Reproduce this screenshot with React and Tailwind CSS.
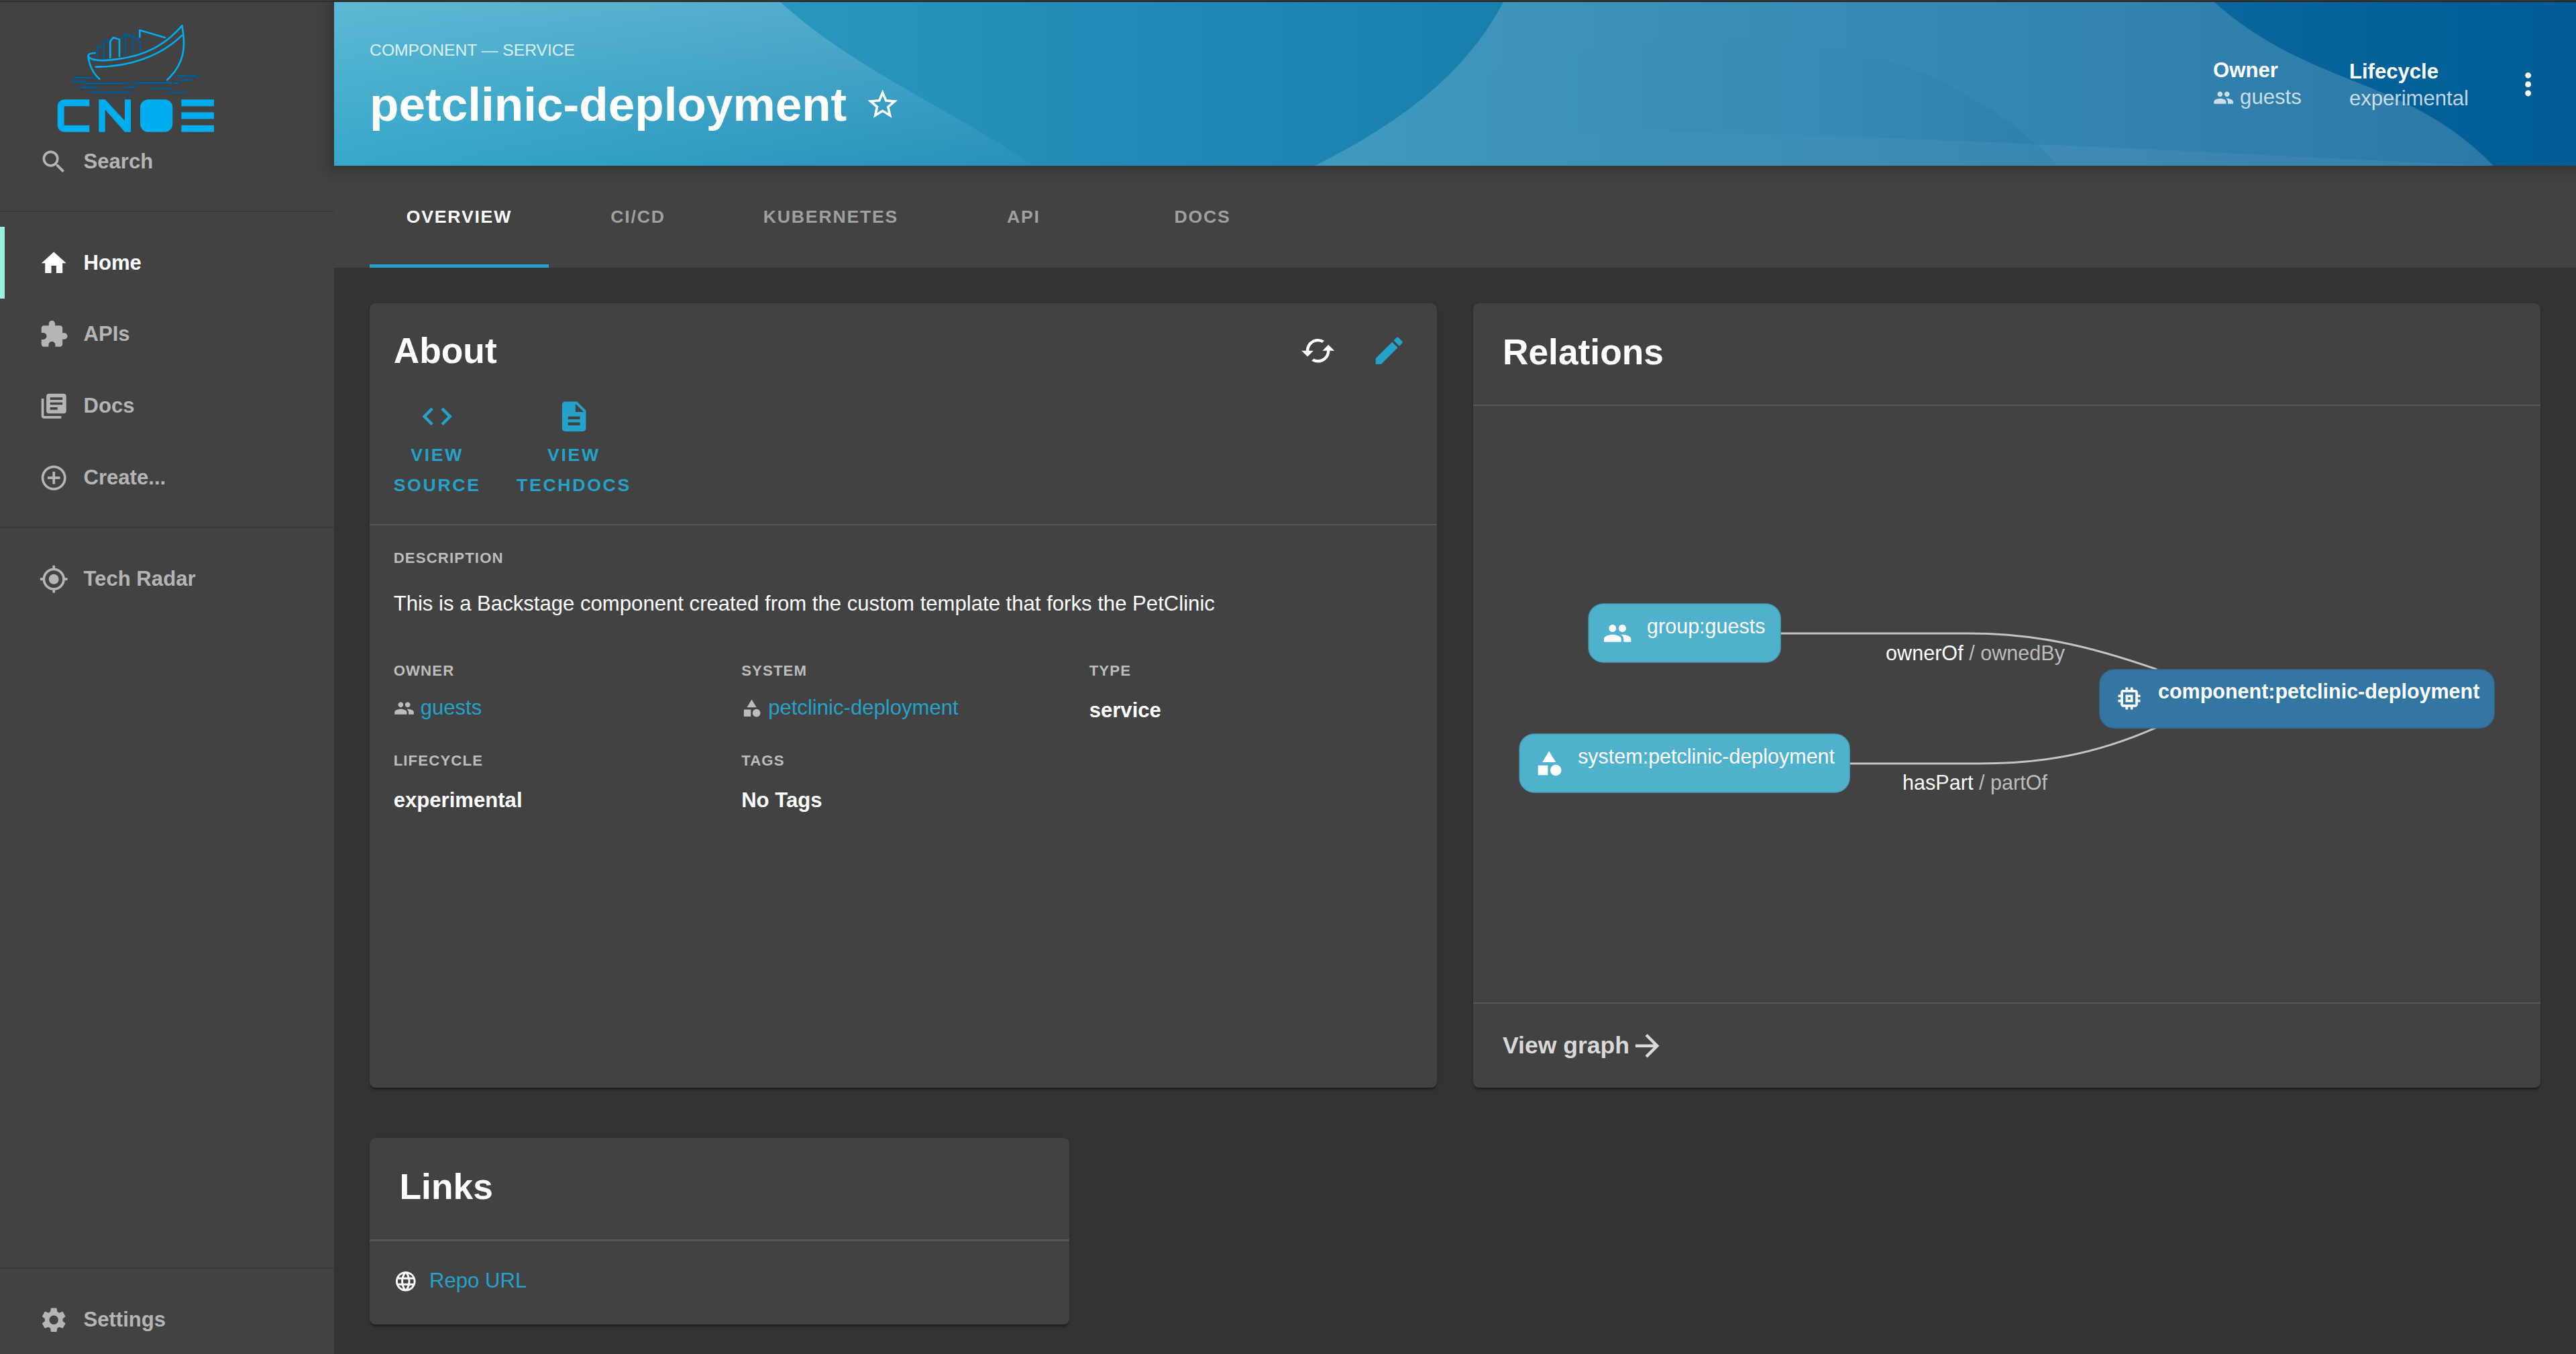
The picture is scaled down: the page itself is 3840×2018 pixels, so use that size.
// App.jsx - catalog entity page, dark theme
import React from 'react';
import {
  MdHome,
  MdExtension,
  MdLibraryBooks,
  MdAddCircleOutline,
  MdGpsFixed,
  MdSettings,
  MdSearch,
  MdStarBorder,
  MdMoreVert,
  MdCached,
  MdEdit,
  MdCode,
  MdDescription,
  MdGroup,
  MdCategory,
  MdLanguage,
  MdMemory,
  MdArrowForward,
} from 'react-icons/md';

const MAIN_NAV = [
  { label: 'Home', icon: MdHome, active: true },
  { label: 'APIs', icon: MdExtension },
  { label: 'Docs', icon: MdLibraryBooks },
  { label: 'Create...', icon: MdAddCircleOutline },
];

const TABS = ['Overview', 'CI/CD', 'Kubernetes', 'API', 'Docs'];

function Logo() {
  // viewBox is 3x screen pixels of the logo block
  return (
    <svg viewBox="0 0 900 540" className="block w-[135px] h-[81px] ml-[27px] mt-[7.6px] overflow-visible" fill="none">
      <g stroke="#00aeef" strokeWidth="8" strokeLinecap="round" strokeLinejoin="round">
        <path d="M245 177 Q215 178 214 190 Q222 255 265 293" />
        <path d="M214 190 C225 215 290 212 340 205 C470 190 560 140 634 55" />
        <path d="M248 239 C400 240 540 190 634 98" />
        <path d="M634 55 C650 140 650 220 568 297" />
        <path d="M445 106 L445 75 L558 108" />
        <path d="M313 198 V125 L326 108 L354 116 V192" />
      </g>
      <g stroke="#005b94" strokeWidth="8" strokeLinecap="round" strokeLinejoin="round">
        <path d="M255 198 V147 H273" />
        <path d="M284 200 V122 H306" />
        <path d="M362 110 L380 95 L418 100 L447 127 V172" />
        <path d="M381 185 V97 M413 175 V105" />
        <path d="M150 287 H243 M145 305 H195 L198 313 H390 M412 311 H625 M612 280 H708 M632 298 H673" />
        <path d="M174 332 H255 M378 331 H427 M500 336 H582 M230 352 H405 M575 354 H650" />
      </g>
      <g fill="#00aeef">
        <path d="M220 400 H110 Q92 400 92 418 V497 Q92 515 110 515 H220" fill="none" stroke="#00aeef" strokeWidth="30" />
        <polygon points="262,530 262,385 290,385 378,480 378,385 405,385 405,530 378,530 290,430 290,530" />
        <rect x="447" y="385" width="145" height="145" rx="36" />
        <rect x="631" y="385" width="146" height="30" />
        <rect x="631" y="442" width="146" height="30" />
        <rect x="631" y="500" width="146" height="30" />
      </g>
    </svg>
  );
}

function NavItem({ item }) {
  const Icon = item.icon;
  return (
    <div className={`relative flex items-center h-12 pl-[26px] gap-2.5 text-sm font-bold ${item.active ? 'text-white' : 'text-[#b5b5b5]'}`}>
      {item.active && <span className="absolute left-0 inset-y-0 w-[3px] bg-[#9bf0e1]" />}
      <Icon size={20} />
      <span>{item.label}</span>
    </div>
  );
}

function Sidebar() {
  return (
    <aside className="w-56 shrink-0 flex flex-col bg-[#424242] overflow-hidden">
      <div className="h-[83px]">
        <Logo />
      </div>
      <NavItem item={{ label: 'Search', icon: MdSearch }} />
      <div className="h-px bg-[#383838] mt-[9px] mb-2.5" />
      {MAIN_NAV.map((item) => (
        <NavItem key={item.label} item={item} />
      ))}
      <div className="h-px bg-[#383838] mt-[9px] mb-2.5" />
      <NavItem item={{ label: 'Tech Radar', icon: MdGpsFixed }} />
      <div className="mt-auto -mb-px">
        <div className="h-px bg-[#383838] mb-2.5" />
        <NavItem item={{ label: 'Settings', icon: MdSettings }} />
      </div>
    </aside>
  );
}

function HeaderWaves() {
  // Coordinates are screen pixels, measured from the header's top left corner
  return (
    <svg viewBox="0 0 3342 244" preserveAspectRatio="none" className="absolute inset-0 w-full h-full">
      <defs>
        <linearGradient id="fade" x1="0" y1="0" x2="0" y2="1">
          <stop offset="0" stopColor="#fff" stopOpacity="0.21" />
          <stop offset="1" stopColor="#fff" stopOpacity="0.02" />
        </linearGradient>
        <linearGradient id="fadeRight" x1="0" y1="0" x2="1" y2="0">
          <stop offset="0" stopColor="#005b94" stopOpacity="0" />
          <stop offset="0.7" stopColor="#005b94" stopOpacity="0.02" />
          <stop offset="1" stopColor="#005b94" stopOpacity="0.12" />
        </linearGradient>
        <linearGradient id="fadeBand" x1="0" y1="0" x2="1" y2="0">
          <stop offset="0" stopColor="#fff" stopOpacity="0" />
          <stop offset="0.5" stopColor="#fff" stopOpacity="0.05" />
          <stop offset="1" stopColor="#fff" stopOpacity="0.05" />
        </linearGradient>
      </defs>
      <path d="M0 0 H665 C770 95 900 150 1045 244 H0 Z" fill="url(#fade)" />
      <path d="M1743 0 C1690 100 1600 175 1461 244 H3219 C3090 110 2950 130 2802 0 Z" fill="#fff" fillOpacity="0.17" />
      <path d="M2570 244 C2500 170 2450 150 2402 119 C2200 30 1900 30 1650 130 L1461 244 Z" fill="url(#fadeRight)" />
      <path d="M1800 190 C2300 195 2800 225 3219 244 H1800 Z" fill="url(#fadeBand)" />
    </svg>
  );
}

function PageHeader() {
  return (
    <header className="relative z-10 h-[110px] shrink-0 flex justify-between items-center text-white bg-[linear-gradient(90deg,#32a6c9,#005b94)] shadow-[0_0_8px_3px_rgba(20,20,20,0.3)]">
      <HeaderWaves />
      <div className="relative self-start pl-6 pt-6">
        <div className="text-[11.1px] leading-4 pt-[0.5px] -mb-[0.5px] text-white/80">COMPONENT — SERVICE</div>
        <div className="flex items-center gap-3 mt-[9px]">
          <h1 className="text-[32px] leading-10 font-bold">petclinic-deployment</h1>
          <MdStarBorder size={24} className="-mt-px" />
        </div>
      </div>
      <div className="relative flex items-center pr-2">
        <div className="text-sm leading-[18px]">
          <div className="font-bold">Owner</div>
          <div className="flex items-center gap-1 text-white/75">
            <MdGroup size={14} />
            <span>guests</span>
          </div>
        </div>
        <div className="text-sm leading-[18px] ml-8 pt-0.5">
          <div className="font-bold">Lifecycle</div>
          <div className="text-white/75">experimental</div>
        </div>
        <div className="w-12 h-12 ml-4 flex items-center justify-center">
          <MdMoreVert size={24} />
        </div>
      </div>
    </header>
  );
}

function Tabs() {
  return (
    <nav className="h-[68px] shrink-0 flex pl-6 bg-[#424242]">
      {TABS.map((tab, i) => (
        <div
          key={tab}
          className={`relative min-w-[120px] px-6 pt-px flex items-center justify-center text-xs font-bold uppercase tracking-[0.8px] ${i === 0 ? 'text-white' : 'text-[#a0a0a0]'}`}
        >
          {tab}
          {i === 0 && <span className="absolute inset-x-0 bottom-0 h-0.5 bg-[#24a2c9]" />}
        </div>
      ))}
    </nav>
  );
}

function Card({ className = '', children }) {
  return (
    <section className={`rounded bg-[#424242] shadow-[0_2px_1px_-1px_rgba(0,0,0,0.2),0_1px_1px_0_rgba(0,0,0,0.14),0_1px_3px_0_rgba(0,0,0,0.12)] ${className}`}>
      {children}
    </section>
  );
}

function Divider() {
  return <div className="h-px bg-[#575757]" />;
}

function Label({ children }) {
  return <div className="text-[10px] leading-[13px] font-bold uppercase tracking-[0.5px] text-[#bdbdbd]">{children}</div>;
}

function Field({ label, children }) {
  return (
    <div>
      <Label>{label}</Label>
      {children}
    </div>
  );
}

function LinkValue({ icon: Icon, children }) {
  return (
    <div className="flex items-center gap-1 mt-2 text-sm leading-5 text-[#24a2c9]">
      <Icon size={14} className="text-[#bdbdbd]" />
      <span>{children}</span>
    </div>
  );
}

function PlainValue({ children }) {
  return <div className="mt-2.5 text-sm leading-5 font-bold text-white">{children}</div>;
}

function IconLink({ icon: Icon, line1, line2 }) {
  return (
    <div className="flex flex-col items-center text-[#24a2c9]">
      <Icon size={24} />
      <div className="mt-1 text-xs leading-5 font-bold tracking-[1.2px] text-center">
        <div>{line1}</div>
        <div>{line2}</div>
      </div>
    </div>
  );
}

function AboutCard() {
  return (
    <Card className="h-[526px]">
      <div className="flex justify-between items-start pt-4 pb-4 pl-4 pr-2">
        <div>
          <h2 className="text-2xl leading-8 font-bold text-white">About</h2>
          <div className="flex gap-6 mt-4">
            <IconLink icon={MdCode} line1="VIEW" line2="SOURCE" />
            <IconLink icon={MdDescription} line1="VIEW" line2="TECHDOCS" />
          </div>
        </div>
        <div className="flex -mt-2">
          <div className="w-12 h-12 flex items-center justify-center text-white">
            <MdCached size={24} />
          </div>
          <div className="w-12 h-12 flex items-center justify-center text-[#24a2c9]">
            <MdEdit size={24} />
          </div>
        </div>
      </div>
      <Divider />
      <div className="px-4 pt-4">
        <Label>Description</Label>
        <p className="mt-3.5 text-sm leading-5 text-white">
          This is a Backstage component created from the custom template that forks the PetClinic
        </p>
        <div className="grid grid-cols-3 gap-y-[17px] w-[700px] mt-[28.5px]">
          <Field label="Owner">
            <LinkValue icon={MdGroup}>guests</LinkValue>
          </Field>
          <Field label="System">
            <LinkValue icon={MdCategory}>petclinic-deployment</LinkValue>
          </Field>
          <Field label="Type">
            <PlainValue>service</PlainValue>
          </Field>
          <Field label="Lifecycle">
            <PlainValue>experimental</PlainValue>
          </Field>
          <Field label="Tags">
            <PlainValue>No Tags</PlainValue>
          </Field>
        </div>
      </div>
    </Card>
  );
}

function GraphNode({ x, y, w, fill, stroke, icon: Icon, iconX, iconY, text, textX, textY, bold }) {
  return (
    <g>
      <rect x={x} y={y} width={w} height="87" rx="22" fill={fill} stroke={stroke} strokeWidth="1.5" />
      <Icon x={iconX} y={iconY} size={44} className="text-white" />
      <text x={textX} y={textY} fontSize="30.5" fontWeight={bold ? 700 : 400} fill="#fff">
        {text}
      </text>
    </g>
  );
}

function RelationsGraph() {
  // Diagram canvas, in screen pixels of the reference
  return (
    <svg viewBox="2196 604 1591 889" className="block w-full h-[400px]">
      <g fill="none" stroke="#c4c4c4" strokeWidth="3">
        <path d="M2654 943 H2934 C3030 943 3110 960 3213 996 L3290 1040" />
        <path d="M2757 1137 H2950 C3040 1137 3120 1125 3213 1084 L3290 1040" />
      </g>
      <GraphNode x={2368} y={899} w={286} fill="#4fb1cc" stroke="#489fb8" icon={MdGroup} iconX={2389} iconY={921} text="group:guests" textX={2455} textY={943} />
      <GraphNode x={2265} y={1093} w={492} fill="#4fb1cc" stroke="#489fb8" icon={MdCategory} iconX={2287} iconY={1115} text="system:petclinic-deployment" textX={2352} textY={1137} />
      <GraphNode x={3130} y={997} w={588} fill="#3476a3" stroke="#306d97" icon={MdMemory} iconX={3152} iconY={1018} text="component:petclinic-deployment" textX={3217} textY={1040} bold />
      <text x="2811" y="983" fontSize="30.6" fill="#bdbdbd">
        <tspan fill="#fff">ownerOf</tspan> / ownedBy
      </text>
      <text x="2836" y="1176" fontSize="30.6" fill="#bdbdbd">
        <tspan fill="#fff">hasPart</tspan> / partOf
      </text>
    </svg>
  );
}

function RelationsCard() {
  return (
    <Card className="h-[526px] flex flex-col">
      <h2 className="px-5 pt-[18.5px] pb-[20.5px] text-2xl leading-[29px] font-bold text-white">Relations</h2>
      <Divider />
      <RelationsGraph />
      <Divider />
      <div className="flex-1 flex items-center pl-5 text-base font-bold text-[#d9d9d9]">
        <span>View graph</span>
        <MdArrowForward size={24} />
      </div>
    </Card>
  );
}

function LinksCard() {
  return (
    <Card className="h-[125px]">
      <h2 className="px-5 pt-[18.5px] pb-[20.5px] text-2xl leading-[29px] font-bold text-white">Links</h2>
      <Divider />
      <div className="flex items-center gap-2 pl-4 pt-[17px] text-sm leading-5 text-[#24a2c9]">
        <MdLanguage size={16} className="text-white" />
        <span>Repo URL</span>
      </div>
    </Card>
  );
}

export default function App() {
  // Reference is a 1728 wide layout at 2.2222 device scale
  return (
    <div className="[zoom:2.2222] w-[1728px] h-[908.1px] flex flex-col overflow-hidden bg-[#333333] font-['Liberation_Sans',Arial,sans-serif]">
      <div className="h-[0.9px] shrink-0 bg-[#3c3c3c]" />
      <div className="h-[0.45px] shrink-0 bg-[#262626]" />
      <div className="flex-1 flex min-h-0">
        <Sidebar />
        <main className="flex-1 flex flex-col min-w-0">
          <PageHeader />
          <Tabs />
          <div className="p-6">
            <div className="grid grid-cols-2 gap-6">
              <AboutCard />
              <RelationsCard />
            </div>
            <div className="grid grid-cols-3 gap-6 mt-[34px]">
              <LinksCard />
            </div>
          </div>
        </main>
      </div>
    </div>
  );
}
